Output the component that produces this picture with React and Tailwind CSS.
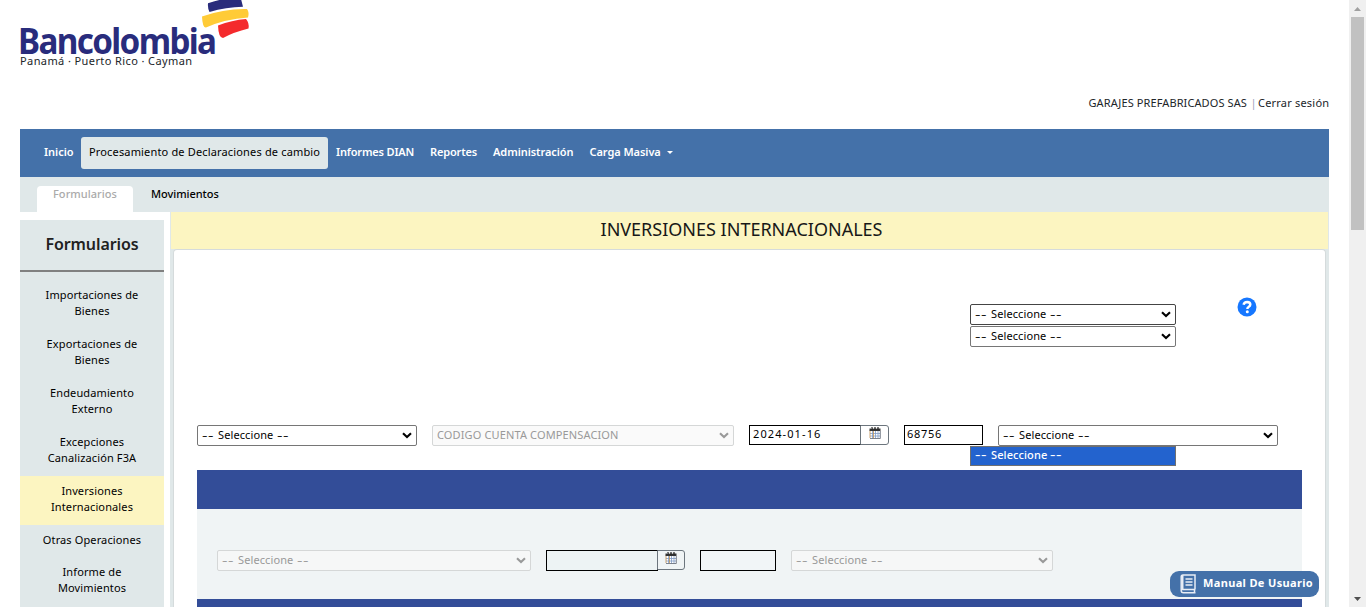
import React from "react";

const sideItems = [
  { lines: ["Importaciones de", "Bienes"], cls: "h-[49px]" },
  { lines: ["Exportaciones de", "Bienes"], cls: "h-[49px]" },
  { lines: ["Endeudamiento", "Externo"], cls: "h-[49px]" },
  { lines: ["Excepciones", "Canalización F3A"], cls: "h-[49px]" },
  { lines: ["Inversiones", "Internacionales"], cls: "h-[49px] bg-[#fcf5c1]" },
  { lines: ["Otras Operaciones"], cls: "h-[32px]" },
  { lines: ["Informe de", "Movimientos"], cls: "h-[49px]" },
];

function Placeholder() {
  return (
    <span className="flex whitespace-pre">
      <span className="w-[16px] origin-left scale-x-[1.550] tracking-[0.4px]">--</span>
      <span className="w-[58.500px] tracking-[0.1px]">Seleccione</span>
      <span className="origin-left scale-x-[1.550] tracking-[0.4px]">--</span>
    </span>
  );
}

function Select({ className = "", label, disabled = false, dark = false }) {
  const tone = disabled
    ? "border-[#d5d7d7] bg-[#f8f8f8]/70 text-[#999]"
    : dark
      ? "border-[#444] bg-white text-black"
      : "border-[#767676] bg-white text-black";
  return (
    <div className={`flex h-[21px] shrink-0 items-center justify-between rounded-[2px] border pr-[4px] pl-[4px] ${tone} ${className}`}>
      <span className="pb-[2px] leading-[16px] tracking-[0.13px] whitespace-nowrap">{label || <Placeholder />}</span>
      <svg width="10" height="7" viewBox="0 0 10 7" fill="none" stroke="currentColor" strokeWidth="2.100">
        <path d="M1 1.2 5 5.1 9 1.2" />
      </svg>
    </div>
  );
}

function CalendarButton({ className = "" }) {
  return (
    <div className={`-ml-px flex h-[20px] shrink-0 justify-center rounded-r-[3px] border border-[#6c757d] pt-[1px] ${className}`}>
      <svg width="12" height="12" viewBox="0 0 12 12">
        <path d="M1.500 2h9.500v9.500H1.500z" fill="#fff" />
        <path d="M3.500 4v7.500M6.500 4v7.500M9 4v7.500M1 6.500h10M1 9h10" stroke="#7f9ac4" strokeWidth=".8" />
        <path d="M1 3.500v7.500M4.500 4v7" stroke="#c2904f" strokeWidth=".8" />
        <path d="M1 11.500h10.300V4" fill="none" stroke="#6d7480" strokeWidth=".9" />
        <path d="M.5 1.500h11V4H.5z" fill="#333" />
        <path d="M3 0v2.500M6 0v2.500M9 0v2.500" stroke="#222" strokeWidth="1.200" />
        <path d="M1.800 1.300h.7M4.300 1.300h.7M7.300 1.300h.7" stroke="#fff" strokeWidth=".7" />
      </svg>
    </div>
  );
}

function Header() {
  return (
    <header className="flex h-[129px] shrink-0 justify-between">
      <div className="relative w-[240px]">
        <div className="mt-[21px] -ml-[2px] h-[32px] w-[225px] origin-left scale-x-[0.91] text-[36.500px] leading-[38px] font-bold tracking-[-1.800px] text-[#292c7c]">
          Bancolombia
        </div>
        <div className="h-[16px] text-[11px] leading-[16px] tracking-[0.4px] whitespace-nowrap">Panamá · Puerto Rico · Cayman</div>
        <svg className="absolute top-0 left-[180px]" width="52" height="42" viewBox="0 0 52 42">
          <path d="M8 3.300Q16 .5 24 -1H41L43 6.800Q26 7 9.500 12Q7.500 8 8 3.300Z" fill="#292c7c" />
          <path d="M2 16.500Q24 8.500 47 9Q49.500 12.500 48 17.500Q25 19 6 27.500Q2.500 28 2 16.500Z" fill="#ffcb37" />
          <path d="M18 25.500Q32 20 46 19Q49.500 23 48.500 28.500Q34 32 23 38Q18.500 38 18 25.500Z" fill="#f42a2d" />
        </svg>
      </div>
      <div className="mt-[95px] flex text-[11px] leading-[16px] whitespace-nowrap">
        <span className="w-[162px] tracking-[0.1px]">GARAJES PREFABRICADOS SAS</span>
        <span className="w-[7.500px] text-[#9aa0bd]">|</span>
        <span className="w-[71px] tracking-[0.2px]">Cerrar sesión</span>
      </div>
    </header>
  );
}

function Nav() {
  return (
    <nav className="flex h-[48px] shrink-0 items-center bg-[#4471a9] pb-px pl-[24px] text-[11px] font-semibold whitespace-nowrap text-white">
      <span className="w-[37px]">Inicio</span>
      <span className="mt-px flex h-[32px] w-[247px] items-center rounded-[3px] bg-[#e0e8e9] pb-px pl-[8px] font-normal tracking-[0.16px] text-black">
        Procesamiento de Declaraciones de cambio
      </span>
      <span className="ml-[8px] w-[94px] tracking-[-0.16px]">Informes DIAN</span>
      <span className="w-[63px] tracking-[-0.15px]">Reportes</span>
      <span className="w-[96.500px] tracking-[-0.06px]">Administración</span>
      <span className="w-[77.500px] tracking-[-0.06px]">Carga Masiva</span>
      <svg width="6" height="3" viewBox="0 0 6 3" fill="white"><path d="M0 0h6L3 3z" /></svg>
    </nav>
  );
}

function Tabs() {
  return (
    <div className="flex h-[35px] shrink-0 items-end bg-[#e0e8e9] pl-[17px] text-[11px]">
      <div className="h-[26px] w-[96px] rounded-t-[4px] bg-white text-center leading-[16px] font-medium tracking-[0.05px] text-[#aaa]">Formularios</div>
      <div className="h-[26px] pl-[18px] leading-[16px] font-medium tracking-[-0.05px] text-black">Movimientos</div>
    </div>
  );
}

function Sidebar() {
  return (
    <aside className="mt-[8px] w-[144px] shrink-0 bg-[#e0e8e9] text-center">
      <div className="h-[52px] border-b-2 border-[#808080] text-[16px] leading-[49px] font-semibold tracking-[-0.1px] text-[#212121]">Formularios</div>
      <div className="pt-[8px] text-[11px] tracking-[0.12px] text-black">
        {sideItems.map((item) => (
          <div key={item.lines[0]} className={`pt-[7px] leading-[16px] ${item.cls}`}>
            {item.lines.map((line) => (
              <div key={line}>{line}</div>
            ))}
          </div>
        ))}
      </div>
    </aside>
  );
}

function Content() {
  return (
    <main className="ml-[6px] flex w-[1159px] shrink-0 flex-col bg-[#e0e8e9] px-px">
      <h1 className="h-[37px] shrink-0 bg-[#fcf5c1] pr-[16px] text-center text-[18px] leading-[34px] text-[#181818]">INVERSIONES INTERNACIONALES</h1>
      <div className="mr-[2px] ml-[2px] flex flex-1 flex-col rounded-t-[4px] border border-b-0 border-[#d5dbdc] bg-white px-[23px] text-[11px]">
        <div className="flex h-[175px] shrink-0">
          <div className="mt-[54px] ml-[773px] flex flex-col gap-px">
            <Select className="w-[206px]" dark />
            <Select className="w-[206px]" />
          </div>
          <svg className="mt-[47px] ml-[61px]" width="20" height="20" viewBox="0 0 20 20">
            <circle cx="10" cy="10" r="9.500" fill="#1677ff" />
            <path d="M6.600 7.700Q7.100 4.900 10.200 4.900Q13.300 5.100 13.300 7.500Q13.300 8.900 11.500 10Q10.400 10.600 10.400 12" fill="none" stroke="#fff" strokeWidth="2.500" />
            <circle cx="10.300" cy="14.800" r="1.500" fill="#fff" />
          </svg>
        </div>
        <div className="relative flex h-[45px] shrink-0">
          <Select className="w-[220px]" />
          <Select className="ml-[15px] w-[302px]" label="CODIGO CUENTA COMPENSACION" disabled />
          <div className="ml-[15px] h-[20px] w-[112px] shrink-0 border border-black pl-[3px] leading-[16px] tracking-[1.100px] text-black">2024-01-16</div>
          <CalendarButton className="w-[29px]" />
          <div className="ml-[15px] h-[20px] w-[79px] shrink-0 border border-black pl-[2px] leading-[16px] tracking-[0.7px] text-black">68756</div>
          <Select className="ml-[15px] w-[280px]" />
          <div className="absolute top-[21px] left-[773px] h-[20px] w-[206px] border border-[#707070] bg-[#2363ce] pl-[4px] leading-[16px] font-medium text-white">
            <Placeholder />
          </div>
        </div>
        <div className="h-[39px] w-[1105px] shrink-0 bg-[#334d98]" />
        <div className="flex h-[90px] w-[1105px] shrink-0 bg-[#f0f4f5] pt-[41px] pl-[20px]">
          <Select className="w-[314px]" disabled />
          <div className="ml-[15px] h-[21px] w-[112px] shrink-0 border border-black bg-[#edf3f4]" />
          <CalendarButton className="w-[28px]" />
          <div className="ml-[15px] h-[21px] w-[76px] shrink-0 border border-black bg-[#f1f5f7]" />
          <Select className="ml-[15px] w-[262px]" disabled />
        </div>
        <div className="h-[8px] w-[1105px] shrink-0 bg-[#334d98]" />
      </div>
    </main>
  );
}

function Scrollbar() {
  return (
    <div className="flex h-full w-[17px] shrink-0 flex-col items-center bg-[#f0f0f0]">
      <div className="flex h-[17px] shrink-0 items-center">
        <svg width="7" height="4" viewBox="0 0 7 4" fill="#a0a0a0"><path d="M0 4h7L3.500 0z" /></svg>
      </div>
      <div className="h-[213px] w-[13px] shrink-0 bg-[#c1c1c1]" />
      <div className="mt-auto flex h-[17px] shrink-0 items-center">
        <svg width="7" height="4" viewBox="0 0 7 4" fill="#505050"><path d="M0 0h7L3.500 4z" /></svg>
      </div>
    </div>
  );
}

export default function App() {
  return (
    <div className="relative flex h-[607px] w-[1366px] overflow-hidden bg-white font-['Noto_Sans',sans-serif] text-[#212529]">
      <div className="flex h-full w-[1349px] flex-col px-[20px]">
        <Header />
        <Nav />
        <Tabs />
        <div className="flex min-h-0 flex-1">
          <Sidebar />
          <Content />
        </div>
      </div>
      <Scrollbar />
      <div className="absolute right-[47px] bottom-[10px] flex h-[26px] w-[149px] items-center rounded-[9px] bg-[#4471a9] pl-[10px] text-[11px] font-bold text-white">
        <svg width="16" height="20" viewBox="0 0 16 20" fill="none" stroke="#e8edf5" strokeWidth="1.500">
          <path d="M15 15V1H3Q1.200 1 1.200 3V16.500Q1.200 18.800 3.500 18.800H15.500M1.500 15.500H15.500M14.500 15.500V18.800" />
          <path d="M2.500 1V15.500" strokeWidth="2" />
          <path d="M5.500 5H12.500M5.500 8H12.500M5.500 11H12.500" />
        </svg>
        <span className="ml-[7px] pb-px tracking-[0.35px] whitespace-nowrap">Manual De Usuario</span>
      </div>
    </div>
  );
}
